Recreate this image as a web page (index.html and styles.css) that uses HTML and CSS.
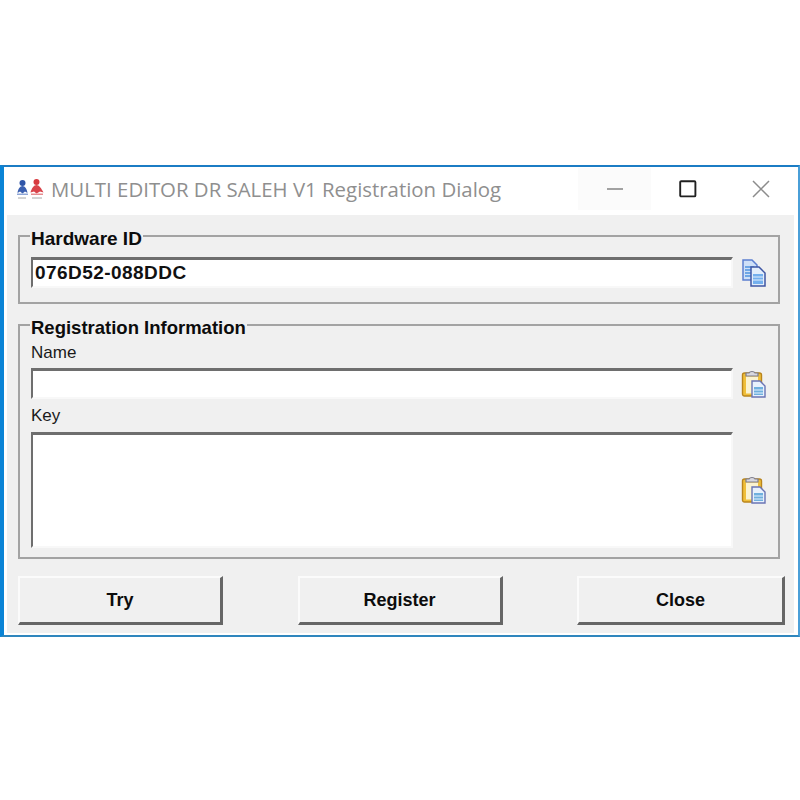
FILE: index.html
```html
<!DOCTYPE html>
<html lang="en">
<head>
    <meta charset="UTF-8">
    <meta name="viewport" content="width=device-width, initial-scale=1.0">
    <title>Registration Dialog</title>
    <link rel="stylesheet" href="styles.css">
</head>
<body>

    <div class="window">
        <div class="titlebar">
            <svg class="app-icon" width="28" height="24" viewBox="0 0 28 24">
                <circle cx="6.500" cy="6" r="3" fill="#2f55a8"/>
                <path d="M1.500 16c.5-4 2.500-7 5-7s4.500 3 5 7l-2.500-1.500-2.500 2-2.500-2z" fill="#3a5fb0"/>
                <path d="M1 16.500h11v1.500H1z" fill="#8fa6d6"/>
                <circle cx="20.500" cy="5" r="3" fill="#d83a3f"/>
                <path d="M14.500 15.500c1-4 3.500-7.500 6-7.500s5 3.500 7 7.500l-3.500-1-3.500 2-2.500-2z" fill="#d9434a"/>
                <path d="M15 16.500h12v1.500H15z" fill="#e58d90"/>
                <path d="M2 21h8M16 21h10" stroke="#a8a8a8" stroke-width="1"/>
            </svg>
            <span class="title">MULTI EDITOR DR SALEH V1 Registration Dialog</span>
            <div class="win-btn win-min">
                <svg width="16" height="16" viewBox="0 0 16 16"><path d="M0 8h16" stroke="#8c8c8c" stroke-width="1.6"/></svg>
            </div>
            <div class="win-btn">
                <svg width="18" height="18" viewBox="0 0 18 18"><rect x="1.200" y="1.200" width="15.200" height="15.200" rx="1" fill="none" stroke="#202020" stroke-width="1.900"/></svg>
            </div>
            <div class="win-btn">
                <svg width="18" height="18" viewBox="0 0 18 18"><path d="M1 1l16 16M17 1L1 17" stroke="#8c8c8c" stroke-width="1.500"/></svg>
            </div>
        </div>

        <div class="client">
            <fieldset class="group group-hw">
                <legend>Hardware ID</legend>
                <div class="row">
                    <div class="field field-id">076D52-088DDC</div>
                    <svg class="icon" width="26" height="28" viewBox="0 0 26 28">
                        <path d="M2 1h9l5 5v15H2z" fill="#cfe0f7" stroke="#5c7fd0" stroke-width="1.500"/>
                        <path d="M4 8h9M4 11h9M4 14h9M4 17h6" stroke="#4f93e0" stroke-width="1.600"/>
                        <path d="M10 8h8l6 6v13H10z" fill="#e3eefb" stroke="#3f57a4" stroke-width="1.500"/>
                        <path d="M12 15h10v10H12z" fill="#74b0ee"/>
                        <path d="M12 18h10M12 21h10" stroke="#e3eefb" stroke-width="1"/>
                    </svg>
                </div>
            </fieldset>

            <fieldset class="group group-reg">
                <legend>Registration Information</legend>
                <div class="label label-name">Name</div>
                <div class="row">
                    <input class="field field-name" type="text">
                    <svg class="icon" width="26" height="28" viewBox="0 0 26 28">
                        <use href="#paste"/>
                    </svg>
                </div>
                <div class="label label-key">Key</div>
                <div class="row row-key">
                    <textarea class="field field-key"></textarea>
                    <svg class="icon" width="26" height="28" viewBox="0 0 26 28">
                        <g id="paste">
                            <rect x="1.500" y="3" width="19" height="23" rx="2" fill="#f0bf3a" stroke="#b9851c" stroke-width="1.400"/>
                            <rect x="5" y="6.500" width="12" height="17" fill="#fbf3d0"/>
                            <path d="M5 6V3h3C9 1 13 1 14 3h3v3z" fill="#d8d8e0" stroke="#7d7d8c" stroke-width="1.200"/>
                            <path d="M11 11h8l5 5v11H11z" fill="#e8f1fc" stroke="#6a74b4" stroke-width="1.400"/>
                            <path d="M13 17h9v8h-9z" fill="#6fb0de"/>
                            <path d="M13 20h9M13 23h9" stroke="#e8f1fc" stroke-width="1"/>
                        </g>
                    </svg>
                </div>
            </fieldset>

            <div class="buttons">
                <button class="btn">Try</button>
                <button class="btn">Register</button>
                <button class="btn btn-close">Close</button>
            </div>
        </div>
    </div>

</body>
</html>
```

FILE: styles.css
```css
body {
    margin: 0;
    background-color: #ffffff;
    font-family: 'Liberation Sans', Arial, sans-serif;
    color: #111111;
}
.window {
    margin-top: 165px;
    height: 472px;
    box-sizing: border-box;
    border-top: 2px solid #1b7cc4;
    border-left: 4px solid #0a84d6;
    border-right: 2px solid #4a9fd8;
    border-bottom: 2px solid #2f86bd;
    background-color: #ffffff;
    display: flex;
    flex-direction: column;
}
.titlebar {
    height: 48px;
    box-sizing: border-box;
    display: flex;
    align-items: center;
    padding: 0 1px 4px 12px;
}
.app-icon {
    margin-right: 7px;
}
.title {
    flex: 1;
    font-family: 'Open Sans', sans-serif;
    font-size: 20.4px;
    color: #8f8f8f;
    white-space: nowrap;
}
.win-btn {
    width: 73px;
    height: 42px;
    display: flex;
    align-items: center;
    justify-content: center;
}
.win-min {
    background-color: #fbfbfb;
}
.client {
    flex: 1;
    margin: 0 4px 2px 3px;
    background-color: #f0f0f0;
    padding: 8px 12px 0 11px;
}
.group {
    margin: 0;
    padding: 0 11px 0 11px;
    border: 2px solid #a3a3a3;
    width: 762px;
    box-sizing: border-box;
}
.group legend {
    padding: 6px 1px 0;
    margin-left: -1px;
    font-size: 18.5px;
    line-height: 20px;
    font-weight: bold;
    color: #0c0c0c;
}
.group-hw {
    height: 81px;
}
.group-hw legend {
    font-size: 19px;
}
.group-reg {
    height: 247px;
    margin-top: 8px;
}
.row {
    display: flex;
    align-items: center;
}
.group-hw .row {
    margin-top: 8px;
}
.field {
    flex: 1;
    box-sizing: border-box;
    margin: 0;
    padding: 0 0 0 2px;
    display: block;
    border-style: solid;
    border-width: 3px 2px 2px 2px;
    border-color: #6e6e6e #f8f8f8 #f8f8f8 #6e6e6e;
    background-color: #ffffff;
    outline: none;
    resize: none;
    border-radius: 0;
}
.field-id {
    height: 31px;
    font-size: 19px;
    line-height: 25px;
    font-weight: bold;
    letter-spacing: 0.45px;
}
.field-name {
    height: 31px;
}
.field-key {
    height: 116px;
}
.icon {
    margin-left: 8px;
    flex-shrink: 0;
}
.label {
    font-size: 17px;
    line-height: 20px;
    color: #1a1a1a;
}
.label-name {
    margin-top: 5px;
    margin-bottom: 5px;
}
.label-key {
    margin-top: 7px;
    margin-bottom: 6px;
}
.buttons {
    display: flex;
    justify-content: space-between;
    margin-top: 17px;
    width: 767px;
}
.btn {
    width: 205px;
    height: 49px;
    padding: 0;
    font-family: 'Liberation Sans', Arial, sans-serif;
    font-size: 18px;
    font-weight: bold;
    color: #0c0c0c;
    background-color: #f0f0f0;
    border-style: solid;
    border-width: 2px 3px 3px 2px;
    border-color: #fbfbfb #666666 #666666 #fbfbfb;
}
.btn-close {
    width: 208px;
}
```
